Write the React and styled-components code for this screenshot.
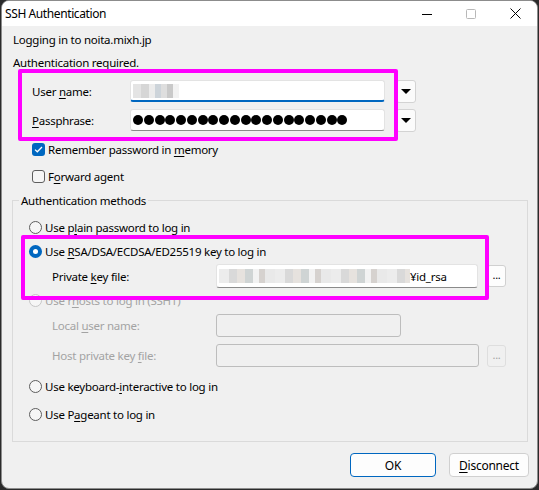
import React from 'react';
import styled, { createGlobalStyle, css } from 'styled-components';

const GlobalStyle = createGlobalStyle`
  html, body {
    margin: 0;
    padding: 0;
    background: #2b2b2b;
  }
  body {
    font-family: "Noto Sans", "Segoe UI", sans-serif;
    font-size: 11.5px;
    letter-spacing: -0.25px;
    color: #000;
  }
`;

// Window frame
const Frame = styled.div`
  position: relative;
  margin-left: 1px;
  width: 535px;
  height: 487px;
  border: 1px solid #8c8c8c;
  border-radius: 8px;
  overflow: hidden;
  background: #f0f0f0;
  display: flex;
  flex-direction: column;
`;

const TitleBar = styled.div`
  height: 25px;
  background: #fff;
  display: flex;
  align-items: center;
  padding-left: 3px;
`;

const Title = styled.div`
  flex: 1;
  font-size: 12px;
  letter-spacing: -0.4px;
`;

const Caption = styled.div`
  width: 44px;
  height: 25px;
  display: flex;
  align-items: center;
  justify-content: center;
`;

const Body = styled.div`
  flex: 1;
  padding: 0 8px 0 10px;
  display: flex;
  flex-direction: column;
`;

const Line = styled.div`
  height: ${p => p.$h || 23}px;
  display: flex;
  align-items: center;
  padding-left: 1px;
  white-space: nowrap;
`;

const Creds = styled.div`
  margin-top: 7px;
  display: grid;
  grid-template-columns: 88px 255px 21px;
  grid-auto-rows: 22px;
  column-gap: 10px;
  row-gap: 7px;
  padding-left: 20px;
  align-items: center;
`;

const inputBase = css`
  height: 22px;
  box-sizing: border-box;
  border-radius: 3px;
  display: flex;
  align-items: center;
  overflow: hidden;
`;

const Input = styled.div`
  ${inputBase}
  background: #fff;
  border: 1px solid #e3e3e3;
  border-bottom: 1px solid #8a8a8a;
  ${p =>
    p.$focused &&
    css`
      border-bottom: 2px solid #0067c0;
    `}
  padding-left: 2px;
`;

const DisabledInput = styled.div`
  ${inputBase}
  width: ${p => p.$w}px;
  height: 23px;
  background: #f0f0f0;
  border: 1px solid #bdbdbd;
`;

const Dot = styled.span`
  width: 10px;
  height: 10px;
  border-radius: 50%;
  background: #000;
  margin-right: 0.75px;
  flex: none;
`;

const DropButton = styled.div`
  ${inputBase}
  justify-self: end;
  width: 20px;
  height: 23px;
  justify-content: center;
  background: #fbfbfb;
  border: 1px solid #d3d3d3;
`;

const Triangle = styled.div`
  width: 0;
  height: 0;
  border-left: 5px solid transparent;
  border-right: 5px solid transparent;
  border-top: 5px solid #000;
`;

const Mosaic = styled.div`
  width: ${p => p.$w}px;
  height: 14px;
  background: ${p => p.$bg};
  flex: none;
`;

const CheckRow = styled.div`
  height: ${p => p.$h || 27}px;
  display: flex;
  align-items: center;
  padding-left: ${p => p.$indent ?? 20}px;
  gap: 3px;
  white-space: nowrap;
  color: ${p => (p.$disabled ? '#a3a3a3' : '#000')};
`;

const Box = styled.div`
  width: 13px;
  height: 13px;
  box-sizing: border-box;
  border-radius: 3px;
  display: flex;
  align-items: center;
  justify-content: center;
  flex: none;
  ${p =>
    p.$checked
      ? css`
          background: #0067c0;
        `
      : css`
          background: #f6f6f6;
          border: 1px solid #5e5e5e;
        `}
`;

const Radio = styled.div`
  width: 13px;
  height: 13px;
  box-sizing: border-box;
  border-radius: 50%;
  display: flex;
  align-items: center;
  justify-content: center;
  flex: none;
  ${p =>
    p.$checked
      ? css`
          background: #0067c0;
          &::after {
            content: '';
            width: 5px;
            height: 5px;
            border-radius: 50%;
            background: #fff;
          }
        `
      : css`
          background: #f6f6f6;
          border: 1px solid ${p.$disabled ? '#c6c6c6' : '#5e5e5e'};
        `}
`;

const Group = styled.fieldset`
  margin: 3px 0 0 0;
  padding: 0 0 0 16px;
  width: 516px;
  box-sizing: border-box;
  height: 249px;
  border: 1px solid #dadada;
  border-radius: 0;
`;

const Legend = styled.legend`
  padding: 0 2px;
  margin-left: -10px;
`;

const FieldRow = styled.div`
  height: ${p => p.$h}px;
  display: grid;
  grid-template-columns: 164px 262px 9px 19px;
  align-items: center;
  padding-left: 23px;
  white-space: nowrap;
  color: ${p => (p.$disabled ? '#a3a3a3' : '#000')};
`;

const PathInput = styled(Input)`
  height: 24px;
  padding-left: 2px;
`;

const DotButton = styled.div`
  ${inputBase}
  grid-column: 4;
  width: 19px;
  height: 22px;
  justify-content: center;
  background: ${p => (p.$disabled ? '#f0f0f0' : '#fdfdfd')};
  border: 1px solid ${p => (p.$disabled ? '#dedede' : '#d0d0d0')};
  color: ${p => (p.$disabled ? '#a3a3a3' : '#000')};
  font-size: 11px;
  line-height: 1;
  padding-bottom: 3px;
`;

const Footer = styled.div`
  display: flex;
  justify-content: flex-end;
  gap: 13px;
  padding: 11px 0 0;
`;

const Button = styled.div`
  ${inputBase}
  width: ${p => p.$w}px;
  height: 24px;
  justify-content: center;
  background: #fdfdfd;
  border: 1px solid ${p => (p.$primary ? '#0067c0' : '#d0d0d0')};
  border-radius: 4px;
  font-size: 12px;
`;

const Highlight = styled.div`
  position: absolute;
  left: ${p => p.$x}px;
  top: ${p => p.$y}px;
  width: ${p => p.$w}px;
  height: ${p => p.$h}px;
  box-sizing: border-box;
  border: 4px solid #ff00ff;
  border-radius: 2px;
  pointer-events: none;
`;

const U = styled.span`
  text-decoration: underline;
  text-underline-offset: 2px;
`;

const userMosaic =
  'linear-gradient(90deg, #e4e4e4 0 8px, #d6d6d6 8px 16px, #ececec 16px 22px, #cdd4da 22px 28px, #dedede 28px 34px, #c9c9c9 34px 40px, #f2f2f2 40px)';

const pathMosaic =
  'repeating-linear-gradient(90deg, #ececec 0 10px, #d9d9d9 10px 18px, #e6e2de 18px 26px, #cfd4d4 26px 34px, #f2f2f2 34px 40px, #d6d2cf 40px 46px, #e9e9e9 46px 56px)';

const Check = () => (
  <svg width="9" height="7" viewBox="0 0 9 7">
    <path d="M1 3.6 L3.3 5.8 L8 1" fill="none" stroke="#fff" strokeWidth="1.3" />
  </svg>
);

export default function App() {
  return (
    <>
      <GlobalStyle />
      <Frame>
        <TitleBar>
          <Title>SSH Authentication</Title>
          <Caption>
            <svg width="10" height="10" viewBox="0 0 10 10">
              <path d="M0 5.5 H10" stroke="#000" strokeWidth="1" />
            </svg>
          </Caption>
          <Caption>
            <svg width="10" height="10" viewBox="0 0 10 10">
              <rect x="0.5" y="0.5" width="9" height="9" fill="none" stroke="#b8b8b8" rx="1" />
            </svg>
          </Caption>
          <Caption>
            <svg width="11" height="11" viewBox="0 0 11 11">
              <path d="M0.5 0.5 L10.5 10.5 M10.5 0.5 L0.5 10.5" stroke="#000" strokeWidth="1" />
            </svg>
          </Caption>
        </TitleBar>
        <Body>
          <Line $h={26}>Logging in to noita.mixh.jp</Line>
          <Line $h={21}>Authentication required.</Line>

          <Creds>
            <span>
              User <U>n</U>ame:
            </span>
            <Input $focused>
              <Mosaic $w={46} $bg={userMosaic} />
            </Input>
            <DropButton>
              <Triangle />
            </DropButton>
            <span>
              <U>P</U>assphrase:
            </span>
            <Input>
              {Array.from({ length: 20 }, (_, i) => (
                <Dot key={i} />
              ))}
            </Input>
            <DropButton>
              <Triangle />
            </DropButton>
          </Creds>

          <CheckRow $h={28} style={{ marginTop: 4 }}>
            <Box $checked>
              <Check />
            </Box>
            <span>
              Remember password in <U>m</U>emory
            </span>
          </CheckRow>
          <CheckRow $h={27}>
            <Box />
            <span>
              F<U>o</U>rward agent
            </span>
          </CheckRow>

          <Group>
            <Legend>Authentication methods</Legend>
            <CheckRow $indent={0} $h={26} style={{ marginTop: 6 }}>
              <Radio />
              <span>
                Use p<U>l</U>ain password to log in
              </span>
            </CheckRow>
            <CheckRow $indent={0} $h={23}>
              <Radio $checked />
              <span>
                Use <U>R</U>SA/DSA/ECDSA/ED25519 key to log in
              </span>
            </CheckRow>
            <FieldRow $h={26}>
              <span>
                Private <U>k</U>ey file:
              </span>
              <PathInput>
                <Mosaic $w={191} $bg={pathMosaic} />
                <span>¥id_rsa</span>
              </PathInput>
              <DotButton>...</DotButton>
            </FieldRow>
            <CheckRow $indent={0} $disabled $h={23}>
              <Radio $disabled />
              <span>
                Use r<U>h</U>osts to log in (SSH1)
              </span>
            </CheckRow>
            <FieldRow $h={27} $disabled>
              <span>
                Local <U>u</U>ser name:
              </span>
              <DisabledInput $w={185} />
            </FieldRow>
            <FieldRow $h={33} $disabled>
              <span>
                Host private key <U>f</U>ile:
              </span>
              <DisabledInput $w={263} />
              <DotButton $disabled>...</DotButton>
            </FieldRow>
            <CheckRow $indent={0} $h={29}>
              <Radio />
              <span>
                Use keyboard-<U>i</U>nteractive to log in
              </span>
            </CheckRow>
            <CheckRow $indent={0} $h={27}>
              <Radio />
              <span>
                Use P<U>a</U>geant to log in
              </span>
            </CheckRow>
          </Group>

          <Footer>
            <Button $w={86} $primary>
              OK
            </Button>
            <Button $w={80}>
              <span>
                <U>D</U>isconnect
              </span>
            </Button>
          </Footer>
        </Body>
        <Highlight $x={16} $y={68} $w={380} $h={72} />
        <Highlight $x={19} $y={234} $w={468} $h={65} />
      </Frame>
    </>
  );
}
